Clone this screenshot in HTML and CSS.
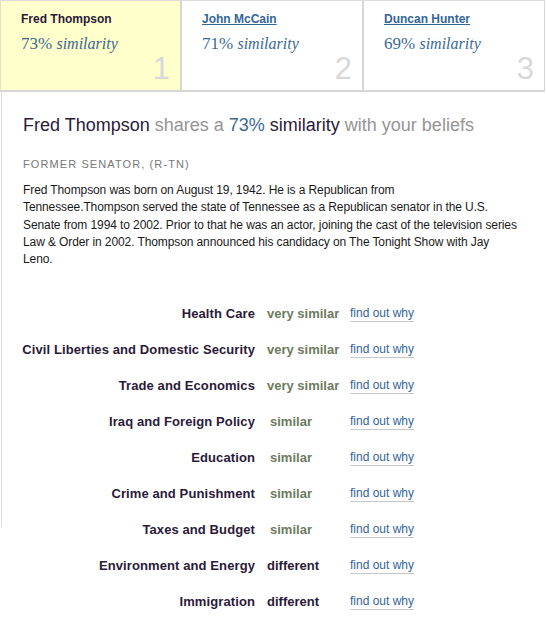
FILE: index.html
```html
<!DOCTYPE html>
<html>
<head>
<meta charset="utf-8">
<link rel="stylesheet" href="styles.css">
</head>
<body>
<div class="tabs">
  <div class="tab active">
    <span class="name">Fred Thompson</span>
    <div class="sim"><span class="pct">73%</span> <em>similarity</em></div>
    <div class="num">1</div>
  </div>
  <div class="tab">
    <a class="name link" href="#">John McCain</a>
    <div class="sim"><span class="pct">71%</span> <em>similarity</em></div>
    <div class="num">2</div>
  </div>
  <div class="tab last">
    <a class="name link" href="#">Duncan Hunter</a>
    <div class="sim"><span class="pct">69%</span> <em>similarity</em></div>
    <div class="num">3</div>
  </div>
</div>
<div class="panel">
  <h1 class="headline"><span class="dark">Fred Thompson</span> shares a <span class="blue">73%</span> <span class="dark">similarity</span> with your beliefs</h1>
  <div class="role">FORMER SENATOR, (R-TN)</div>
  <p class="bio">Fred Thompson was born on August 19, 1942. He is a Republican from<br>Tennessee.Thompson served the state of Tennessee as a Republican senator in the U.S.<br>Senate from 1994 to 2002. Prior to that he was an actor, joining the cast of the television series<br>Law &amp; Order in 2002. Thompson announced his candidacy on The Tonight Show with Jay<br>Leno.</p>
  <div class="issues">
    <div class="label">Health Care</div><div class="rating sim-v">very similar</div><a class="why" href="#">find out why</a>
    <div class="label">Civil Liberties and Domestic Security</div><div class="rating sim-v">very similar</div><a class="why" href="#">find out why</a>
    <div class="label">Trade and Economics</div><div class="rating sim-v">very similar</div><a class="why" href="#">find out why</a>
    <div class="label">Iraq and Foreign Policy</div><div class="rating"><span class="short sim-v">similar</span></div><a class="why" href="#">find out why</a>
    <div class="label">Education</div><div class="rating"><span class="short sim-v">similar</span></div><a class="why" href="#">find out why</a>
    <div class="label">Crime and Punishment</div><div class="rating"><span class="short sim-v">similar</span></div><a class="why" href="#">find out why</a>
    <div class="label">Taxes and Budget</div><div class="rating"><span class="short sim-v">similar</span></div><a class="why" href="#">find out why</a>
    <div class="label">Environment and Energy</div><div class="rating"><span class="short diff">different</span></div><a class="why" href="#">find out why</a>
    <div class="label">Immigration</div><div class="rating"><span class="short diff">different</span></div><a class="why" href="#">find out why</a>
  </div>
</div>
</body>
</html>
```
FILE: styles.css
```css
html, body {
  margin: 0;
  padding: 0;
  background: #fff;
}
body {
  font-family: "Liberation Sans", Arial, sans-serif;
  color: #222;
  width: 545px;
}
.tabs {
  display: flex;
  border-top: 1px solid #dcdcdc;
  border-bottom: 2px solid #d6d6d6;
  height: 89px;
}
.tab {
  width: 160px;
  padding: 11px 0 0 20px;
  border-right: 2px solid #d6d6d6;
  display: flex;
  flex-direction: column;
  align-items: flex-start;
}
.tab.active {
  background: #ffffcc;
  border-left: 1px solid #e2e2c8;
  width: 159px;
}
.tab.last {
  width: 160px;
  border-right: 1px solid #d6d6d6;
}
.name {
  font-size: 12px;
  font-weight: bold;
  color: #2b1a38;
  line-height: 14px;
}
.name.link {
  color: #336699;
  text-decoration: underline;
}
.sim {
  margin-top: 8px;
  font-family: "Liberation Serif", "DejaVu Serif", serif;
  font-size: 17px;
  color: #3a6a94;
  line-height: 20px;
}
.sim em {
  font-size: 16px;
}
.num {
  align-self: flex-end;
  margin-top: auto;
  margin-right: 10px;
  margin-bottom: 8px;
  font-size: 31px;
  line-height: 30px;
  color: #d8d8d8;
}
.panel {
  position: relative;
  margin-left: 1px;
  padding: 0 0 0 22px;
}
.panel::before {
  content: "";
  position: absolute;
  left: 0;
  top: 0;
  width: 1px;
  height: 435px;
  background: #dcdcdc;
}
.headline {
  margin: 0;
  padding-top: 23px;
  font-size: 18px;
  font-weight: normal;
  color: #959595;
  line-height: 20px;
}
.headline .dark { color: #2b1a38; }
.headline .blue { color: #3a6a94; }
.role {
  margin-top: 22px;
  font-size: 11px;
  letter-spacing: 1.1px;
  color: #777;
  line-height: 14px;
}
.bio {
  margin: 11px 0 0 0;
  font-size: 12px;
  letter-spacing: -0.1px;
  line-height: 17.3px;
  color: #1a1a1a;
  white-space: nowrap;
}
.issues {
  margin-top: 38px;
  margin-left: -23px;
  display: grid;
  grid-template-columns: 255px 85px auto;
  grid-auto-rows: 36px;
  align-items: start;
}
.label {
  text-align: right;
  font-size: 13px;
  letter-spacing: 0.1px;
  font-weight: bold;
  color: #2b1a38;
  line-height: 16px;
  white-space: nowrap;
}
.rating {
  padding-left: 12px;
  font-size: 13px;
  font-weight: bold;
  line-height: 16px;
  white-space: nowrap;
}
.sim-v { color: #6c7a5e; }
.diff { color: #2b1a38; }
.short {
  display: block;
  width: 48px;
  text-align: center;
  white-space: nowrap;
}
.why {
  justify-self: start;
  margin-left: 10px;
  font-size: 12px;
  line-height: 15px;
  color: #336699;
  text-decoration: none;
  border-bottom: 1px solid #c8c8c8;
}
```
